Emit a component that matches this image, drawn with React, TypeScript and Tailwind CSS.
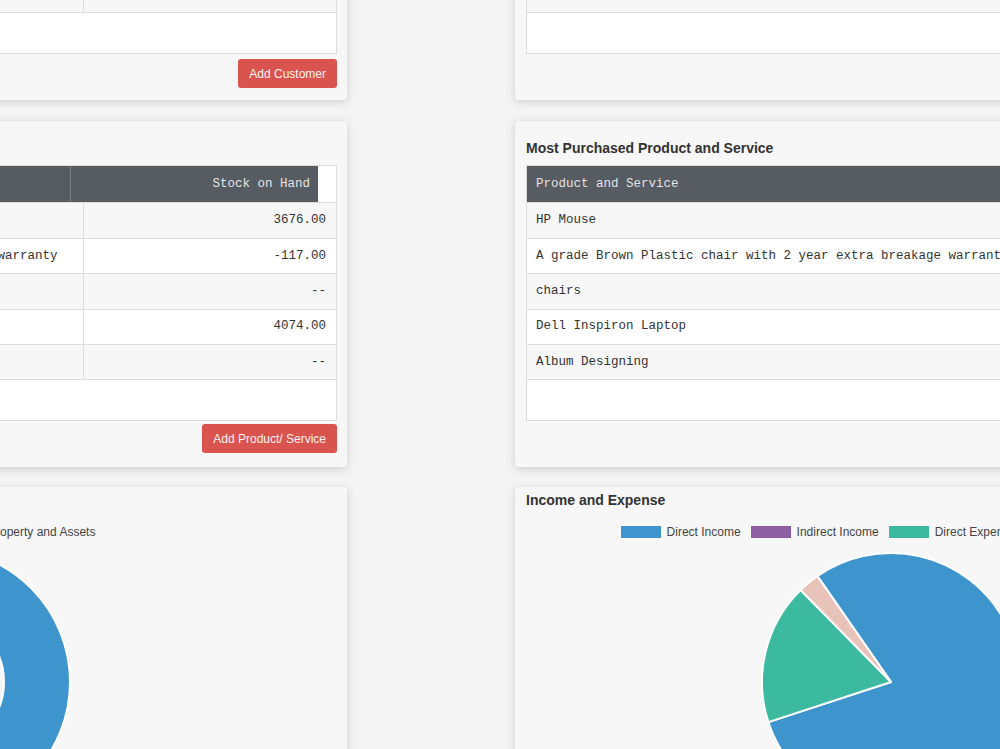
import React from "react";

type Product = { name: string; stock: string };

const products: Product[] = [
  { name: "HP Mouse", stock: "3676.00" },
  { name: "A grade Brown Plastic chair with 2 year extra breakage warranty", stock: "-117.00" },
  { name: "chairs", stock: "--" },
  { name: "Dell Inspiron Laptop", stock: "4074.00" },
  { name: "Album Designing", stock: "--" },
];

const BLUE = "#3e95cd";
const PURPLE = "#8e5ea2";
const GREEN = "#3cba9f";
const PINK = "#e8c3b9";

function slicePath(cx: number, cy: number, r: number, a0: number, a1: number) {
  const rad = (d: number) => (d * Math.PI) / 180;
  const x0 = cx + r * Math.cos(rad(a0));
  const y0 = cy + r * Math.sin(rad(a0));
  const x1 = cx + r * Math.cos(rad(a1));
  const y1 = cy + r * Math.sin(rad(a1));
  const large = a1 - a0 > 180 ? 1 : 0;
  return `M ${cx} ${cy} L ${x0} ${y0} A ${r} ${r} 0 ${large} 1 ${x1} ${y1} Z`;
}

function ringPath(cx: number, cy: number, R: number, r: number) {
  return [
    `M ${cx - R} ${cy} A ${R} ${R} 0 1 1 ${cx + R} ${cy} A ${R} ${R} 0 1 1 ${cx - R} ${cy} Z`,
    `M ${cx - r} ${cy} A ${r} ${r} 0 1 0 ${cx + r} ${cy} A ${r} ${r} 0 1 0 ${cx - r} ${cy} Z`,
  ].join(" ");
}

function Card({ className, children }: { className: string; children: React.ReactNode }) {
  return (
    <div
      className={
        "flex shrink-0 flex-col rounded-[4px] bg-[#f7f7f7] shadow-[0_2px_10px_rgba(0,0,0,0.16)] " + className
      }
    >
      {children}
    </div>
  );
}

function Title({ children }: { children: React.ReactNode }) {
  return (
    <h3 className="h-[20px] whitespace-nowrap font-['Liberation_Sans',Arial,sans-serif] text-[14px] leading-[20px] font-bold text-[#333333]">
      {children}
    </h3>
  );
}

function RedButton({ children }: { children: React.ReactNode }) {
  return (
    <div className="flex justify-end">
      <button className="h-[29px] rounded-[3px] bg-[#d9534f] px-[11px] font-['Liberation_Sans',Arial,sans-serif] text-[12px] text-[#fdf2f2]">
        {children}
      </button>
    </div>
  );
}

function LegendItem({ color, label }: { color: string; label: string }) {
  return (
    <div className="flex items-center">
      <span className="h-[12px] w-[40px]" style={{ backgroundColor: color }} />
      <span className="ml-[6px] whitespace-nowrap font-['Liberation_Sans',Arial,sans-serif] text-[12px] leading-[12px] text-[#444444]">
        {label}
      </span>
    </div>
  );
}

const mono = "font-['Liberation_Mono','DejaVu_Sans_Mono',monospace] text-[12.5px]";

export default function App() {
  return (
    <div className="h-[749px] w-[1000px] overflow-hidden bg-[#f4f4f4]">
      <div className="-mt-[40px] -ml-[435px] flex flex-col">
        {/* Row 1: customers / recent list */}
        <div className="flex gap-[168px]">
          <Card className="w-[782px] px-[10px] pt-[17px] pb-[12px]">
            <div className="border border-[#dddddd] bg-white">
              <div className={"flex h-[35.4px] border-b border-[#dddddd] bg-[#f7f7f7] " + mono}>
                <div className="w-[508px] border-r border-[#dddddd]" />
                <div className="flex-1" />
              </div>
              <div className="h-[40px]" />
            </div>
            <div className="mt-[5px]">
              <RedButton>Add Customer</RedButton>
            </div>
          </Card>
          <Card className="w-[752px] px-[11px] pt-[17px] pb-[12px]">
            <div className="border border-[#dddddd] bg-white">
              <div className="h-[35.4px] border-b border-[#dddddd] bg-[#f7f7f7]" />
              <div className="h-[40px]" />
            </div>
          </Card>
        </div>

        {/* Row 2: stock and most purchased */}
        <div className="mt-[21px] flex gap-[168px]">
          <Card className="w-[782px] px-[10px] pt-[17px] pb-[14px]">
            <Title>Product and Service Stock</Title>
            <div className="mt-[7px] border border-[#dddddd] bg-white">
              <div className={"flex h-[36px] " + mono}>
                <div className="flex w-[495px] items-center border-r border-[#7a7e84] bg-[#575b62] pl-[9px] text-[#e4e4e4]">
                  Product and Service
                </div>
                <div className="flex w-[247px] items-center justify-end bg-[#575b62] pr-[8px] text-[#e4e4e4]">
                  Stock on Hand
                </div>
                <div className="flex-1 bg-white" />
              </div>
              {products.map((p, i) => (
                <div
                  key={p.name}
                  className={
                    "flex h-[35.4px] border-t border-[#dddddd] text-[#333333] " +
                    mono +
                    (i % 2 === 0 ? " bg-[#f7f7f7]" : " bg-white")
                  }
                >
                  <div className="flex w-[508px] items-center overflow-hidden whitespace-nowrap border-r border-[#dddddd] pl-[9px]">
                    {p.name}
                  </div>
                  <div className="flex flex-1 items-center justify-end pr-[10px]">{p.stock}</div>
                </div>
              ))}
              <div className="h-[41px] border-t border-[#dddddd]" />
            </div>
            <div className="mt-[3px]">
              <RedButton>Add Product/ Service</RedButton>
            </div>
          </Card>
          <Card className="w-[752px] px-[11px] pt-[17px] pb-[14px]">
            <Title>Most Purchased Product and Service</Title>
            <div className="mt-[7px] border border-[#dddddd] bg-white">
              <div className={"flex h-[36px] " + mono}>
                <div className="flex flex-1 items-center bg-[#575b62] pl-[9px] text-[#e4e4e4]">
                  Product and Service
                </div>
                <div className="w-[20px] bg-white" />
              </div>
              {products.map((p, i) => (
                <div
                  key={p.name}
                  className={
                    "flex h-[35.4px] items-center whitespace-nowrap border-t border-[#dddddd] pl-[9px] text-[#333333] " +
                    mono +
                    (i % 2 === 0 ? " bg-[#f7f7f7]" : " bg-white")
                  }
                >
                  {p.name}
                </div>
              ))}
              <div className="h-[41px] border-t border-[#dddddd]" />
            </div>
          </Card>
        </div>

        {/* Row 3: charts */}
        <div className="mt-[20px] flex gap-[168px]">
          <Card className="w-[782px] px-[10px] pt-[3px]">
            <Title>Property and Assets</Title>
            <div className="mt-[16px] flex h-[12px] shrink-0 pl-[367px]">
              <LegendItem color={BLUE} label="Property and Assets" />
            </div>
            <svg className="mt-[9px] shrink-0" width={762} height={280} viewBox="0 0 762 280">
              <path
                d={ringPath(362, 135, 133, 67)}
                fill={BLUE}
                fillRule="evenodd"
                stroke="#ffffff"
                strokeWidth={2}
              />
            </svg>
          </Card>
          <Card className="w-[752px] px-[11px] pt-[3px]">
            <Title>Income and Expense</Title>
            <div className="mt-[16px] flex h-[12px] shrink-0 justify-center gap-[10px]">
              <LegendItem color={BLUE} label="Direct Income" />
              <LegendItem color={PURPLE} label="Indirect Income" />
              <LegendItem color={GREEN} label="Direct Expense" />
              <LegendItem color={PINK} label="Indirect Expense" />
            </div>
            <svg className="mt-[9px] shrink-0" width={730} height={280} viewBox="0 0 730 280">
              <g stroke="#ffffff" strokeWidth={2} strokeLinejoin="round">
                <path d={slicePath(365, 135, 129, 235.2, 521.9)} fill={BLUE} />
                <path d={slicePath(365, 135, 129, 161.9, 225.5)} fill={GREEN} />
                <path d={slicePath(365, 135, 129, 225.5, 235.2)} fill={PINK} />
              </g>
            </svg>
          </Card>
        </div>
      </div>
    </div>
  );
}
